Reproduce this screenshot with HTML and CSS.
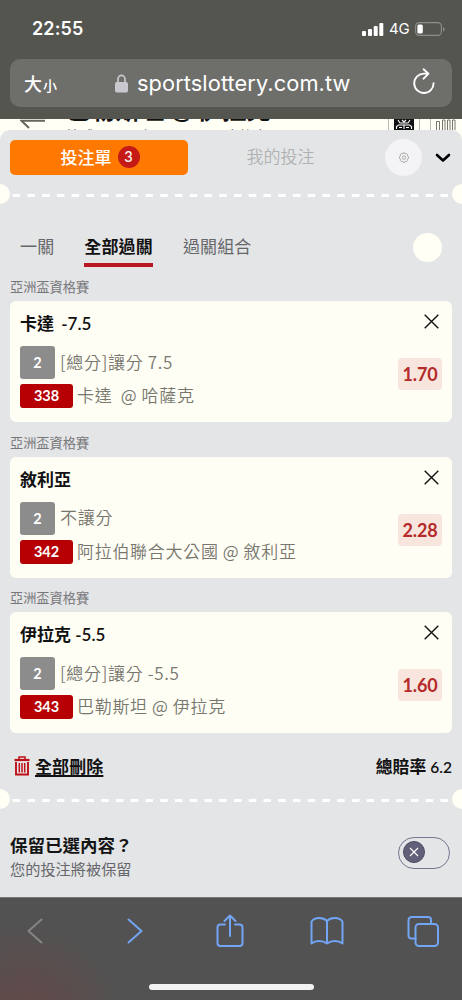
FILE: index.html
```html
<!DOCTYPE html>
<html lang="zh-Hant">
<head>
<meta charset="utf-8">
<meta name="viewport" content="width=device-width, initial-scale=1">
<title>投注單</title>
<link rel="stylesheet" href="styles.css">
</head>
<body>
<div class="screen">
  <header class="browser-top">
    <div class="status">
      <span class="time">22:55</span>
      <div class="status-right">
        <svg width="22" height="14" viewBox="0 0 22 14" fill="#fff"><rect x="0" y="9" width="4" height="5" rx="1"/><rect x="6" y="7" width="4" height="7" rx="1"/><rect x="11.7" y="4" width="4" height="10" rx="1"/><rect x="17.3" y="1" width="4" height="13" rx="1"/></svg>
        <span class="network">4G</span>
        <svg width="30" height="14" viewBox="0 0 30 14"><rect x=".6" y=".6" width="25.8" height="12.8" rx="3.6" fill="none" stroke="#8d8d8a" stroke-width="1.1"/><rect x="2.4" y="2.4" width="5.4" height="9.2" rx="1.5" fill="#fff"/><path d="M28 5v4.400q1.500-.8 1.500-2.200t-1.500-2.200z" fill="#8d8d8a"/></svg>
      </div>
    </div>
    <div class="address">
      <span class="text-size">大<small>小</small></span>
      <div class="host">
        <svg width="13" height="19" viewBox="0 0 13 19"><path d="M3 9V5.300a3.500 4 0 0 1 7 0V9" fill="none" stroke="#c9c8cf" stroke-width="1.700"/><rect x="0" y="8" width="13" height="10.500" rx="1.800" fill="#c9c8cf"/></svg>
        <span>sportslottery.com.tw</span>
      </div>
      <svg class="reload" width="22" height="27" viewBox="0 0 22 27" fill="none" stroke="#fff" stroke-width="1.900" stroke-linecap="round" stroke-linejoin="round"><path d="M20.600 15.200A9.700 9.700 0 1 1 11 5.600h4.300M10.600 1.300l4.900 4.400-4.900 5"/></svg>
    </div>
  </header>

  <section class="match-strip">
    <svg class="back" width="26" height="11" viewBox="0 0 26 11" fill="none" stroke="#67665f" stroke-width="2"><path d="M25 1.800H1.500L9 9"/></svg>
    <div class="match-window">
      <div class="match-copy">
        <div class="match-title">巴勒斯坦 @ 伊拉克</div>
        <div class="match-sub">籃球 &nbsp;|&nbsp; 國際 &nbsp;|&nbsp; 亞洲盃資格賽</div>
      </div>
    </div>
    <svg class="match-tools" width="75" height="11" viewBox="0 0 75 11"><path d="M1.500 0v11M32.500 0v11M43.500 0v11" stroke="#bcbcb6" stroke-width="1"/><rect x="7" width="20" height="11" fill="#111"/><path d="M9.500 10V7.500l2-1.500h11l2 1.500V10M17 6v4M12 8.500h3M19 8.500h3M11 1l2 3h8l2-3M15 1l2 2 2-2" fill="none" stroke="#fff" stroke-width="1.100"/><path d="M49.500 11V2.500h3V11M55.500 11V1h2.500V11M60.500 11V1h2.500V11M65.500 11V1h2.500V11" fill="none" stroke="#77776f"/></svg>
  </section>

  <main class="sheet">
    <div class="slip-tabs">
      <div class="slip-active">投注單<span class="count">3</span></div>
      <div class="slip-other">我的投注</div>
      <div class="settings"><svg width="12" height="12" viewBox="0 0 12 12" fill="none" stroke="#999" stroke-width=".8"><path d="M4.700 2 5.200.8h1.600L7.300 2l1.300-.4 1 1-.4 1.300 1.400.8v1.600l-1.200.8.4 1.200-1.100 1.200-1.400-.4-.5 1.300H5.200l-.6-1.300-1.300.4-1.100-1.200.4-1.200-1.200-.8V4.700l1.200-.8-.4-1.300 1.100-1z"/><circle cx="6" cy="5.600" r="1.700"/></svg></div>
      <svg class="chevron" width="16" height="10" viewBox="0 0 16 10" fill="none" stroke="#000" stroke-width="2.600" stroke-linecap="round" stroke-linejoin="round"><path d="M2 2l6 5.500L14 2"/></svg>
    </div>

    <div class="divider"><svg width="462" height="20" viewBox="0 0 462 20"><path d="M12.700 11.500H451" stroke="#fff" stroke-width="3" stroke-dasharray="7.500 7.250"/><g fill="#fffff5"><circle cy="10" r="10"/><circle cx="462" cy="10" r="10"/></g></svg></div>

    <nav class="parlay-tabs">
      <span>一關</span><span class="selected">全部過關</span><span>過關組合</span><i class="dot"></i>
    </nav>

    <section class="bet">
      <div class="league">亞洲盃資格賽</div>
      <div class="card">
        <div class="info">
          <h2 class="wide-gap">卡達 -7.5</h2>
          <div class="line market"><b class="tag grey">2</b><span>[總分]讓分 7.5</span></div>
          <div class="line"><b class="tag red">338</b><span>卡達&nbsp; @ 哈薩克</span></div>
        </div>
        <div class="side"><svg class="close" width="15" height="15" viewBox="0 0 15 15"><path d="M.7.7l13.600 13.600M14.300.7.7 14.300"/></svg><b class="odds">1.70</b></div>
      </div>
    </section>
    <section class="bet">
      <div class="league">亞洲盃資格賽</div>
      <div class="card">
        <div class="info">
          <h2>敘利亞</h2>
          <div class="line market"><b class="tag grey">2</b><span>不讓分</span></div>
          <div class="line"><b class="tag red">342</b><span>阿拉伯聯合大公國 @ 敘利亞</span></div>
        </div>
        <div class="side"><svg class="close" width="15" height="15" viewBox="0 0 15 15"><path d="M.7.7l13.600 13.600M14.300.7.7 14.300"/></svg><b class="odds">2.28</b></div>
      </div>
    </section>
    <section class="bet">
      <div class="league">亞洲盃資格賽</div>
      <div class="card">
        <div class="info">
          <h2>伊拉克 -5.5</h2>
          <div class="line market"><b class="tag grey">2</b><span>[總分]讓分 -5.5</span></div>
          <div class="line"><b class="tag red">343</b><span>巴勒斯坦 @ 伊拉克</span></div>
        </div>
        <div class="side"><svg class="close" width="15" height="15" viewBox="0 0 15 15"><path d="M.7.7l13.600 13.600M14.300.7.7 14.300"/></svg><b class="odds">1.60</b></div>
      </div>
    </section>

    <div class="summary">
      <svg width="16" height="20" viewBox="0 0 16 20" fill="none" stroke="#be1117"><path d="M5 3V1h6v2" stroke-width="1.500"/><path d="M.5 4h15" stroke-width="2.200"/><path d="M2 6v12.500h12V6" stroke-width="1.900"/><path d="M5.300 7v9.500M8 7v9.500M10.700 7v9.500" stroke-width="1.500"/></svg>
      <span class="delete-all">全部刪除</span>
      <span class="total">總賠率 <span class="total-value">6.2</span></span>
    </div>

    <div class="divider"><svg width="462" height="20" viewBox="0 0 462 20"><path d="M12.700 11.500H451" stroke="#fff" stroke-width="3" stroke-dasharray="7.500 7.250"/><g fill="#fffff5"><circle cy="10" r="10"/><circle cx="462" cy="10" r="10"/></g></svg></div>

    <div class="keep">
      <div>
        <div class="keep-title">保留已選內容？</div>
        <div class="keep-note">您的投注將被保留</div>
      </div>
      <div class="toggle"><div class="knob"><svg width="10" height="10" viewBox="0 0 10 10"><path d="M1 1l8 8M9 1L1 9" stroke="#fff" stroke-width="1.100"/></svg></div></div>
    </div>
  </main>

  <footer class="browser-bottom">
    <div class="toolbar">
      <svg class="muted" width="16" height="36" viewBox="0 0 16 36"><path d="M14.500 6.500 1.500 18l13 11.500"/></svg>
      <svg width="16" height="36" viewBox="0 0 16 36"><path d="M1.500 6.500l13 11.500-13 11.500"/></svg>
      <svg width="28" height="36" viewBox="0 0 28 36"><path d="M9 11.500H4.500Q1.500 11.500 1.500 14.500V30q0 3 3 3h19q3 0 3-3V14.500q0-3-3-3H19M14 23V2.500M8.500 8 14 2.500 19.500 8"/></svg>
      <svg width="34" height="36" viewBox="0 0 34 36"><path d="M17 8C13 4 5 4 1.500 8.500V30.500c4-3.500 11-3.500 15.500 0 4.500-3.500 11.500-3.500 15.500 0V8.500C29 4 21 4 17 8v22.500"/></svg>
      <svg width="32" height="36" viewBox="0 0 32 36"><path d="M8.500 25.500H4.500q-3 0-3-3V7.500q0-3.500 3.500-3.500h16q3 0 3 3v3.500"/><rect x="8.500" y="11" width="22.500" height="22" rx="3.500"/></svg>
    </div>
    <div class="home-bar"></div>
  </footer>
</div>
</body>
</html>
```
FILE: styles.css
```css
* { box-sizing: border-box; }
body { margin: 0; background: #fffef4; font-family: Lato, "Noto Sans CJK TC", sans-serif; }
svg { display: block; flex: none; }
.screen { width: 462px; height: 1000px; overflow: hidden; display: flex; flex-direction: column; }
.screen > * { flex: none; }

.browser-top { height: 119px; background: #555550; color: #fff; font-family: Inter, "Noto Sans CJK TC", sans-serif; padding: 0 10px; }
.status { height: 59px; display: flex; justify-content: space-between; align-items: center; padding: 0 7px 2px 22px; }
.time { font-size: 18px; font-weight: 600; letter-spacing: .1px; }
.status-right { display: flex; align-items: center; gap: 5px; }
.network { font-size: 15px; letter-spacing: -.3px; width: 21px; }
.address { height: 48px; border-radius: 10px; background: #6e6e6a; display: flex; align-items: center; padding: 0 17px 0 14px; }
.text-size { width: 91px; font-size: 18px; font-weight: 500; white-space: nowrap; }
.text-size small { font-size: 14px; margin-left: 1px; }
.host { display: flex; align-items: center; gap: 9px; flex: 1; font-size: 21.800px; letter-spacing: .08px; white-space: nowrap; }
.reload { margin-bottom: 3px; }

.match-strip { height: 11px; background: #fffff5; display: flex; overflow: hidden; padding-left: 20px; }
.match-window { height: 11px; width: 348px; padding-left: 20px; overflow: hidden; }
.match-copy { margin-top: -22px; white-space: nowrap; }
.match-title { font-size: 24.600px; line-height: 26px; font-weight: 700; height: 28px; color: #111; }
.match-sub { font-size: 14px; line-height: 22px; color: #555; word-spacing: 3.200px; }
.match-tools { margin-left: -1px; }

.sheet { height: 767px; background: #e4e5e7; border-radius: 10px 10px 0 0; }
.slip-tabs { height: 54px; padding: 10px 11px 0 10px; display: flex; align-items: flex-start; }
.slip-active { width: 178px; height: 34.500px; padding: 0 0 1px 2px; border-radius: 5px; background: #ff7900; color: #fff; font-size: 17px; font-weight: 500; display: flex; align-items: center; justify-content: center; gap: 6px; }
.count { width: 22px; height: 22px; border-radius: 50%; background: #c61a16; font-size: 14.500px; line-height: 22px; text-align: center; }
.slip-other { width: 185px; line-height: 34px; text-align: center; font-size: 17px; font-weight: 350; color: #b0b1b2; }
.settings { width: 37px; height: 37px; margin-left: 12px; margin-top: -1px; border-radius: 50%; background: #f4f4f6; display: grid; place-items: center; }
.chevron { margin: 13px 0 0 13px; }
.divider { height: 20px; }

.parlay-tabs { height: 67px; padding: 24px 20px 0; display: flex; gap: 30px; font-size: 17px; color: #66676a; }
.parlay-tabs span { height: 39px; line-height: 37px; white-space: nowrap; letter-spacing: .15px; }
.parlay-tabs .selected { color: #111; font-weight: 700; border-bottom: 4px solid #b91822; }
.dot { width: 29px; height: 29px; border-radius: 50%; background: #fffff5; margin: 5px 0 0 auto; }

.bet { height: 155.600px; padding: 0 10px; }
.league { height: 30px; line-height: 32px; font-size: 13.200px; color: #77777a; }
.card { height: 121px; border-radius: 6px; background: #fffef4; display: flex; justify-content: space-between; padding: 10px 10px 0; }
.info { display: flex; flex-direction: column; }
h2 { margin: 0; height: 35px; line-height: 26px; font-size: 17px; font-weight: 600; color: #111; white-space: nowrap; }
.wide-gap { word-spacing: 3px; }
.line { height: 24px; display: flex; align-items: center; gap: 4px; color: #77776f; font-family: "Noto Sans CJK TC", sans-serif; font-size: 17px; font-weight: 350; letter-spacing: .7px; word-spacing: -.3px; white-space: nowrap; }
.line > span { padding-bottom: 2px; line-height: 22px; }
.market { height: 33px; margin-bottom: 5px; gap: 4px; }
.tag { border-radius: 3px; color: #fff; font-family: Lato, sans-serif; font-size: 14.500px; font-weight: 700; letter-spacing: 0; text-align: center; }
.grey { width: 35px; height: 33px; line-height: 34px; background: #8c8c8c; margin-right: 1px; }
.red { width: 53px; height: 24px; line-height: 24px; background: #b70004; }
.side { display: flex; flex-direction: column; align-items: flex-end; }
.close { margin: 3px 3px 29px 0; stroke: #111; stroke-width: 1.400; }
.odds { width: 44px; height: 32px; border-radius: 4px; background: #f8e5de; color: #b42b29; font-size: 18px; letter-spacing: -.2px; line-height: 33px; text-align: center; }

.summary { height: 51px; padding: 6px 10px 0 14px; display: flex; align-items: center; font-weight: 600; font-size: 17px; color: #111; }
.delete-all { margin-left: 5px; text-decoration: underline; text-decoration-thickness: 1.500px; text-underline-offset: 2px; letter-spacing: .1px; line-height: 24px; margin-top: 1px; }
.total { margin-left: auto; font-size: 16.800px; line-height: 24px; margin-top: 1px; }
.total-value { font-size: 15.500px; }
.keep { height: 86px; padding: 24px 12px 0 10px; display: flex; justify-content: space-between; }
.keep-title { font-size: 17.500px; font-weight: 600; line-height: 26px; color: #151515; }
.keep-note { font-size: 15.200px; line-height: 21px; color: #66676a; }
.toggle { width: 52px; height: 32px; margin-top: 4px; border: 1.500px solid #77758f; border-radius: 16px; padding: 3.500px; }
.knob { width: 22px; height: 22px; border-radius: 50%; background: #625f78; border: 1px solid #4c4a65; display: grid; place-items: center; }

.browser-bottom { height: 103px; border-top: 1px solid #777; background: radial-gradient(circle at 25px 125px, rgba(108,68,68,.75), transparent 100px), #525252; }
.toolbar { height: 86px; padding: 0 23px 21px 27px; display: grid; grid-template-columns: 100px 89px 94px 97px 32px; align-items: center; }
.toolbar svg { fill: none; stroke: #72a5f3; stroke-width: 2; stroke-linejoin: round; stroke-linecap: round; }
.toolbar .muted { stroke: #858585; }
.home-bar { width: 165px; height: 6px; border-radius: 3px; background: #f2f2f2; margin: 0 auto; }
```
